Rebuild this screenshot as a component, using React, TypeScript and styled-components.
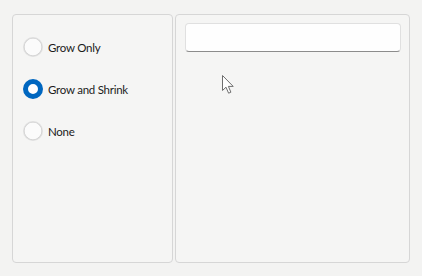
import styled, { createGlobalStyle } from "styled-components";

const GlobalStyle = createGlobalStyle`
    html, body {
        margin: 0;
        padding: 0;
        background: #f3f3f2;
    }
    body {
        font-family: Lato, "Noto Sans", sans-serif;
        color: #1b1b1b;
    }
`;

const Window = styled.div`
    width: 422px;
    height: 276px;
    box-sizing: border-box;
    padding: 14px 12px 13px 12px;
    display: grid;
    grid-template-columns: 161px 1fr;
    gap: 2px;
    position: relative;
    background: #f3f3f2;
`;

const Panel = styled.div`
    border: 1px solid #d6d6d6;
    border-radius: 4px;
    background: #f5f5f4;
    box-sizing: border-box;
`;

const OptionsPanel = styled(Panel)`
    display: flex;
    flex-direction: column;
    gap: 22px;
    padding: 22px 0 0 10px;
`;

const ContentPanel = styled(Panel)`
    padding: 8px 8px 0 9px;
`;

const RadioRow = styled.label`
    display: flex;
    align-items: center;
    gap: 5px;
    height: 20px;
    font-size: 11.5px;
    letter-spacing: -0.25px;
`;

const RadioDot = styled.span<{ $checked?: boolean }>`
    width: 20px;
    height: 20px;
    border-radius: 50%;
    box-sizing: border-box;
    flex: none;
    background: ${(p) => (p.$checked ? "#ffffff" : "#fbfbfb")};
    border: ${(p) => (p.$checked ? "5px solid #0067c0" : "1px solid #8a8a8a40")};
    box-shadow: ${(p) => (p.$checked ? "none" : "inset 0 0 0 0.5px #c9c9c9")};
`;

const TextBox = styled.div`
    height: 29px;
    box-sizing: border-box;
    background: #fefefe;
    border: 1px solid #e0e0e0;
    border-bottom: 1px solid #8c8c8c;
    border-radius: 4px;
`;

const Cursor = styled.svg`
    position: absolute;
    left: 222px;
    top: 75px;
`;

const options = [
    { label: "Grow Only", checked: false },
    { label: "Grow and Shrink", checked: true },
    { label: "None", checked: false },
];

export default function App() {
    return (
        <>
            <GlobalStyle />
            <Window>
                <OptionsPanel>
                    {options.map((o) => (
                        <RadioRow key={o.label}>
                            <RadioDot $checked={o.checked} />
                            {o.label}
                        </RadioRow>
                    ))}
                </OptionsPanel>
                <ContentPanel>
                    <TextBox />
                </ContentPanel>
                <Cursor width="14" height="20" viewBox="0 0 14 20">
                    <path
                        d="M0.5 0.5 L0.5 15.5 L4 12.2 L6.6 18.2 L8.9 17.2 L6.4 11.4 L11.2 11.4 Z"
                        fill="#ffffff"
                        stroke="#6e6e6e"
                        strokeWidth="1"
                        strokeLinejoin="round"
                    />
                </Cursor>
            </Window>
        </>
    );
}
